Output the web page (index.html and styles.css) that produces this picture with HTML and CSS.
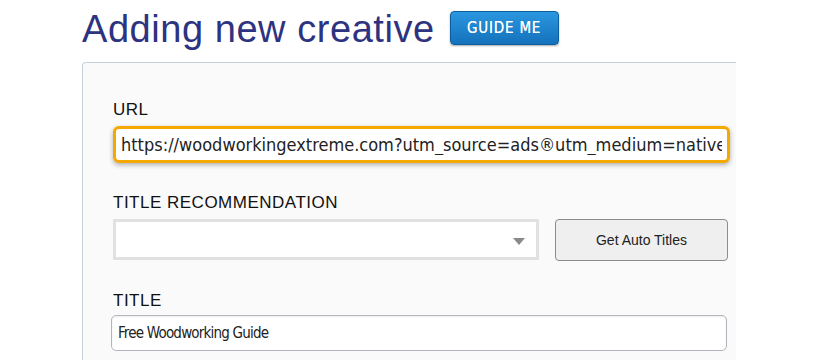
FILE: index.html
```html
<!DOCTYPE html>
<html lang="en">
<head>
  <meta charset="UTF-8" />
  <title>Adding new creative</title>
  <link rel="stylesheet" href="styles.css">
</head>
<body>
  <header class="page-head">
    <h1>Adding new creative</h1>
    <button class="guide">GUIDE ME</button>
  </header>

  <main class="panel">
    <div class="field">
      <label>URL</label>
      <input type="text" class="url-input" value="https://woodworkingextreme.com?utm_source=ads&reg;utm_medium=native">
    </div>

    <div class="field">
      <label>TITLE RECOMMENDATION</label>
      <div class="row">
        <div class="select"><span class="caret"></span></div>
        <button class="auto">Get Auto Titles</button>
      </div>
    </div>

    <div class="field last">
      <label>TITLE</label>
      <input type="text" class="title-input" value="Free Woodworking Guide">
    </div>
  </main>
</body>
</html>
```

FILE: styles.css
```css
html, body {
  height: 100%;
}

body {
  margin: 0;
  background: #fff;
  font-family: "Liberation Sans", Arial, sans-serif;
  color: #111;
  overflow: hidden;
}

.page-head {
  display: flex;
  align-items: center;
  gap: 15px;
  padding: 2px 0 0 82px;
  height: 54px;
}

.page-head h1 {
  margin: 0;
  font-weight: normal;
  font-size: 38px;
  letter-spacing: 0.55px;
  color: #2d3380;
}

.guide {
  height: 34px;
  width: 109px;
  margin-top: -3px;
  border: 1px solid #0d5e9e;
  border-radius: 4px;
  background: linear-gradient(#2a97e0, #1571bb);
  color: #fff;
  font-family: "DejaVu Sans Condensed", "DejaVu Sans", sans-serif;
  font-size: 15px;
  letter-spacing: 0.8px;
  text-shadow: 0 0 0.4px #fff;
  box-shadow: 0 1px 2px rgba(0, 0, 0, 0.35);
}

.panel {
  margin: 6px 0 0 82px;
  width: 654px;
  height: 298px;
  box-sizing: border-box;
  border: 1px solid #c6cfe0;
  border-right: none;
  border-bottom: none;
  border-radius: 4px 0 0 0;
  background: #fafafa;
  padding: 37px 0 0 30px;
  overflow: hidden;
}

.field {
  margin-bottom: 30px;
}

.field label {
  display: block;
  font-size: 17px;
  letter-spacing: 0.5px;
  margin-bottom: 6px;
}

.field.last label {
  margin-bottom: 4px;
}

.url-input {
  width: 617px;
  height: 37px;
  box-sizing: border-box;
  border: 3px solid #f5a900;
  border-radius: 6px;
  padding: 0 5px;
  background: #fff;
  font-family: "DejaVu Sans Condensed", "DejaVu Sans", sans-serif;
  font-size: 18px;
  color: #222;
  box-shadow: 0 2px 5px rgba(0, 0, 0, 0.3);
  outline: none;
}

.row {
  display: flex;
  gap: 16px;
}

.select {
  position: relative;
  width: 426px;
  height: 41px;
  box-sizing: border-box;
  border: 3px solid #e1e1e1;
  background: #fff;
}

.caret {
  position: absolute;
  right: 11px;
  top: 16px;
  border-left: 6px solid transparent;
  border-right: 6px solid transparent;
  border-top: 7px solid #8a8a8a;
}

.auto {
  width: 173px;
  height: 42px;
  border: 1px solid #8c8c8c;
  border-radius: 4px;
  background: #efefef;
  font-family: "Liberation Sans", Arial, sans-serif;
  font-size: 14px;
  color: #222;
}

.title-input {
  width: 616px;
  height: 36px;
  margin-left: -2px;
  box-sizing: border-box;
  border: 1px solid #b4b4bc;
  border-radius: 5px;
  padding: 0 6px;
  background: #fff;
  font-family: "DejaVu Sans Condensed", "DejaVu Sans", sans-serif;
  font-size: 15px;
  letter-spacing: -0.8px;
  color: #222;
  box-shadow: inset 0 1px 2px rgba(0, 0, 0, 0.08);
}
```
